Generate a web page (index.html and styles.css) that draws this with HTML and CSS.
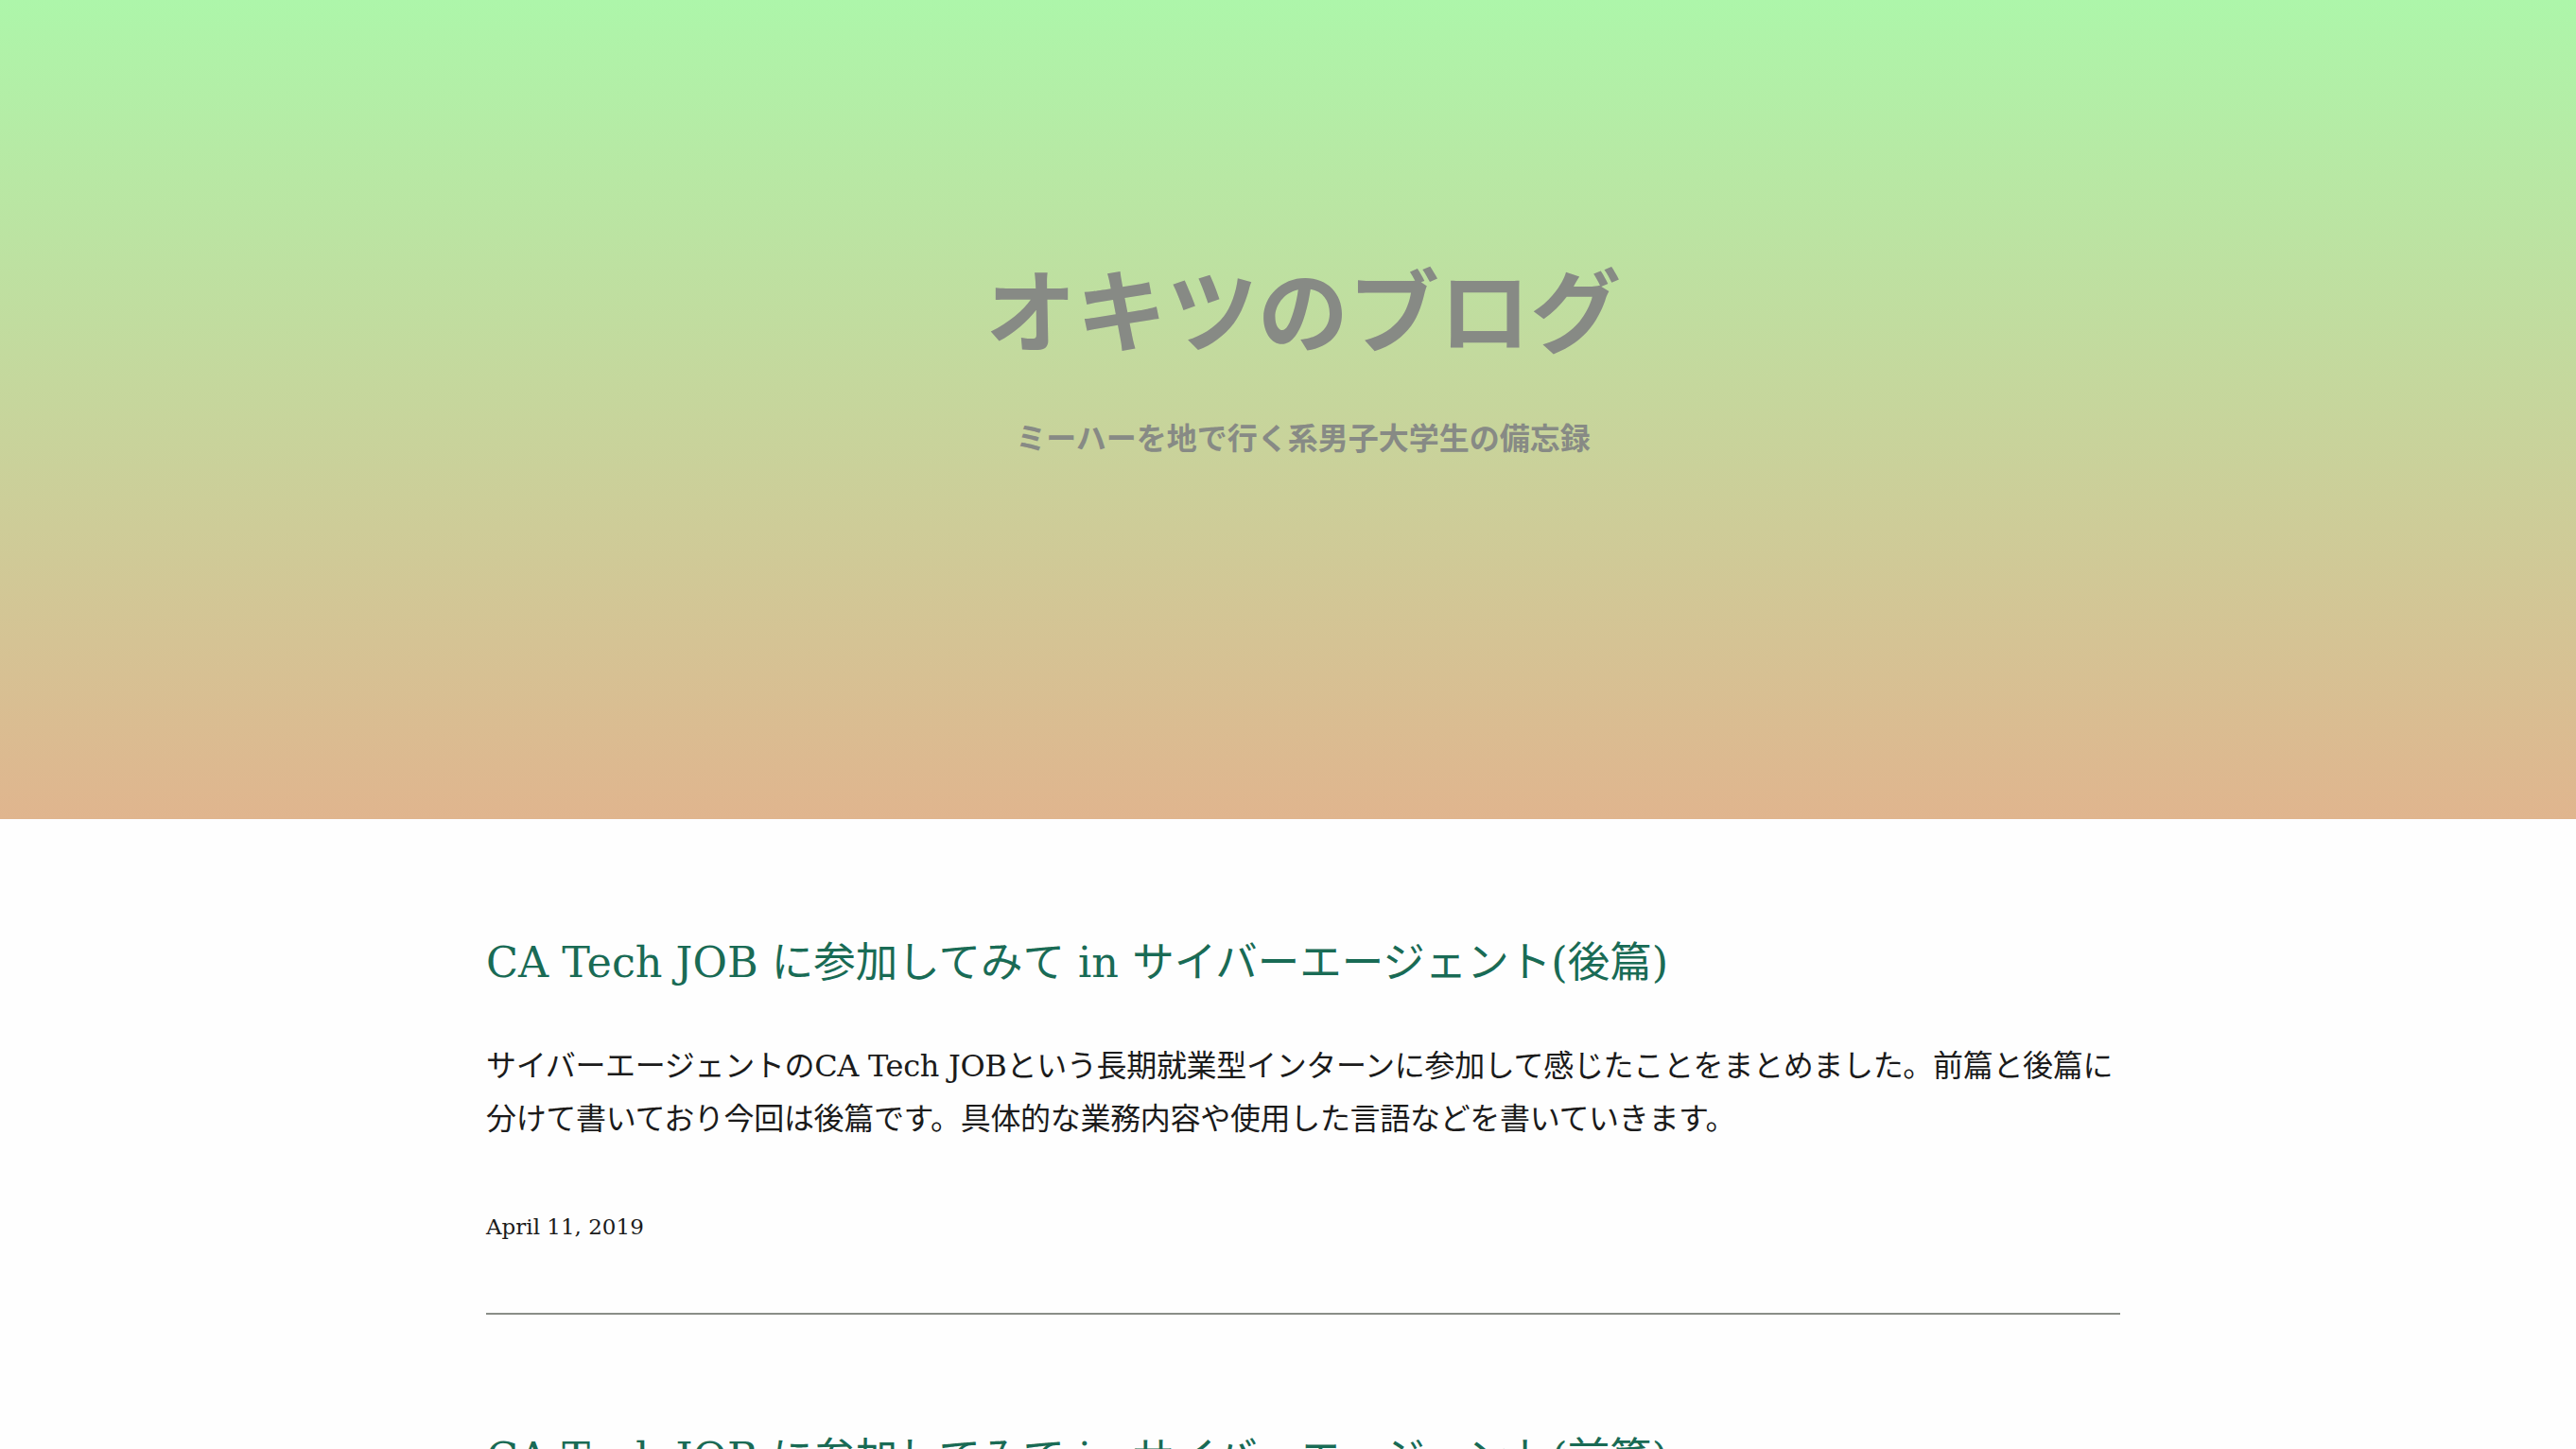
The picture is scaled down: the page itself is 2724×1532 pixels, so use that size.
FILE: index.html
```html
<!DOCTYPE html>
<html lang="ja">
<head>
<meta charset="utf-8">
<title>オキツのブログ</title>
<link rel="stylesheet" href="styles.css">
</head>
<body>
<header class="hero">
  <div class="hero-inner">
    <h1 class="site-title">オキツのブログ</h1>
    <p class="site-desc">ミーハーを地で行く系男子大学生の備忘録</p>
  </div>
</header>
<main class="content">
  <article class="post">
    <h2 class="post-title"><a href="#">CA Tech JOB に参加してみて in サイバーエージェント(後篇)</a></h2>
    <p class="post-excerpt">サイバーエージェントのCA Tech JOBという長期就業型インターンに参加して感じたことをまとめました。前篇と後篇に分けて書いており今回は後篇です。具体的な業務内容や使用した言語などを書いていきます。</p>
    <p class="post-date">April 11, 2019</p>
  </article>
  <hr class="divider">
  <article class="post">
    <h2 class="post-title"><a href="#">CA Tech JOB に参加してみて in サイバーエージェント(前篇)</a></h2>
    <p class="post-excerpt">サイバーエージェントのCA Tech JOBという長期就業型インターンに参加して感じたことをまとめました。前篇と後篇に分けて書いており今回は前篇です。</p>
    <p class="post-date">April 10, 2019</p>
  </article>
</main>
</body>
</html>
```
FILE: styles.css
```css
html, body {
  margin: 0;
  padding: 0;
  background: #fefefe;
}
body {
  font-family: "DejaVu Serif", "Noto Sans CJK JP", serif;
  color: #1b1b1b;
}
.hero {
  height: 866px;
  background: linear-gradient(to bottom, #adf6aa 0%, #e0b58e 100%);
  box-sizing: border-box;
  padding-top: 266px;
}
.hero-inner {
  width: 1728px;
  margin-left: 514px;
  text-align: center;
  color: #878a85;
  font-family: "Noto Sans CJK JP", sans-serif;
}
.site-title {
  margin: 0;
  font-size: 96px;
  line-height: 116px;
  font-weight: 700;
}
.site-desc {
  margin: 55px 0 0;
  font-size: 32px;
  line-height: 48px;
  font-weight: 700;
}
.content {
  width: 1728px;
  margin-left: 514px;
  padding-top: 122px;
}
.post-title {
  margin: 0;
  font-size: 44.5px;
  line-height: 60px;
  font-weight: 400;
}
.post-title a {
  color: #196b55;
  text-decoration: none;
}
.post-excerpt {
  margin: 51px 0 0;
  font-size: 32px;
  line-height: 56px;
  letter-spacing: -0.01em;
}
.post-date {
  margin: 62px 0 0;
  font-size: 23px;
  line-height: 49px;
}
.divider {
  margin: 66px 0 122px;
  border: 0;
  height: 2px;
  background: #8a8e88;
}
```
